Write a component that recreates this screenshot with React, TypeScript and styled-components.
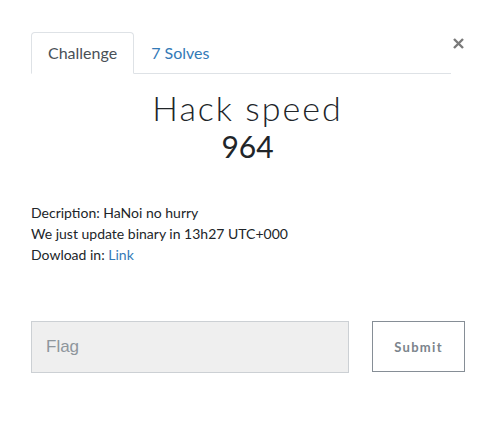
import React from 'react'
import styled, { createGlobalStyle } from 'styled-components'

const GlobalStyle = createGlobalStyle`
  html, body {
    margin: 0;
    padding: 0;
    background: #ffffff;
    font-family: Lato, "Liberation Sans", sans-serif;
    color: #212529;
  }
`

const Modal = styled.div`
  width: 495px;
  height: 422px;
  box-sizing: border-box;
  padding: 32px 31px 0 31px;
  background: #fff;
`

const TopRow = styled.div`
  display: flex;
  align-items: flex-start;
`

const Tabs = styled.ul`
  display: flex;
  list-style: none;
  margin: 0;
  padding: 0;
  width: 420px;
  border-bottom: 1px solid #dee2e6;
`

const Tab = styled.li<{ $active?: boolean }>`
  margin-bottom: -1px;
  padding: 8px 16px;
  font-size: 16px;
  line-height: 24px;
  border: 1px solid ${({ $active }) => ($active ? '#dee2e6' : 'transparent')};
  border-bottom-color: ${({ $active }) => ($active ? '#fff' : 'transparent')};
  border-radius: 4px 4px 0 0;
  background: ${({ $active }) => ($active ? '#fff' : 'transparent')};
  color: ${({ $active }) => ($active ? '#495057' : '#337ab7')};
`

const Close = styled.button`
  margin-left: 1px;
  margin-top: 0;
  border: none;
  background: none;
  padding: 0;
  width: 12px;
  height: 22px;
  display: flex;
  align-items: center;
  justify-content: center;
  color: #7a7a7a;
  cursor: pointer;
`

const Heading = styled.div`
  text-align: center;
  width: 433px;
  margin-top: 14px;
`

const Title = styled.h2`
  margin: 0;
  font-family: Lato, sans-serif;
  font-weight: 300;
  font-size: 34px;
  line-height: 40px;
  letter-spacing: 2px;
  color: #212529;
`

const Points = styled.h4`
  margin: 0;
  font-weight: 400;
  font-size: 30px;
  line-height: 36px;
  color: #212529;
`

const Description = styled.div`
  margin-top: 38px;
  font-size: 14px;
  line-height: 21px;
  color: #212529;

  p {
    margin: 0;
  }

  a {
    color: #337ab7;
    text-decoration: none;
  }
`

const FlagRow = styled.form`
  display: flex;
  margin-top: 56px;
  width: 434px;
  justify-content: space-between;
`

const FlagInput = styled.input`
  box-sizing: border-box;
  width: 318px;
  height: 52px;
  padding: 0 14px;
  background: #efefef;
  border: 1px solid #ccd0d4;
  font-family: "Liberation Sans", Arial, sans-serif;
  font-size: 17px;
  color: #495057;
  outline: none;

  &::placeholder {
    color: #8e969c;
  }
`

const SubmitButton = styled.button`
  box-sizing: border-box;
  width: 93px;
  height: 51px;
  background: #fff;
  border: 1px solid #868e96;
  font-family: Lato, sans-serif;
  font-weight: 700;
  font-size: 13px;
  letter-spacing: 1.3px;
  color: #7b848c;
  cursor: pointer;
`

export default function App() {
  return (
    <>
      <GlobalStyle />
      <Modal>
        <TopRow>
          <Tabs>
            <Tab $active>Challenge</Tab>
            <Tab>7 Solves</Tab>
          </Tabs>
          <Close type="button" aria-label="Close">
            <svg width="11" height="11" viewBox="0 0 11 11">
              <path d="M1 1 L10 10 M10 1 L1 10" stroke="currentColor" strokeWidth="2.4" />
            </svg>
          </Close>
        </TopRow>
        <Heading>
          <Title>Hack speed</Title>
          <Points>964</Points>
        </Heading>
        <Description>
          <p>Decription: HaNoi no hurry</p>
          <p>We just update binary in 13h27 UTC+000</p>
          <p>
            Dowload in: <a href="#">Link</a>
          </p>
        </Description>
        <FlagRow onSubmit={(e) => e.preventDefault()}>
          <FlagInput placeholder="Flag" />
          <SubmitButton type="submit">Submit</SubmitButton>
        </FlagRow>
      </Modal>
    </>
  )
}
